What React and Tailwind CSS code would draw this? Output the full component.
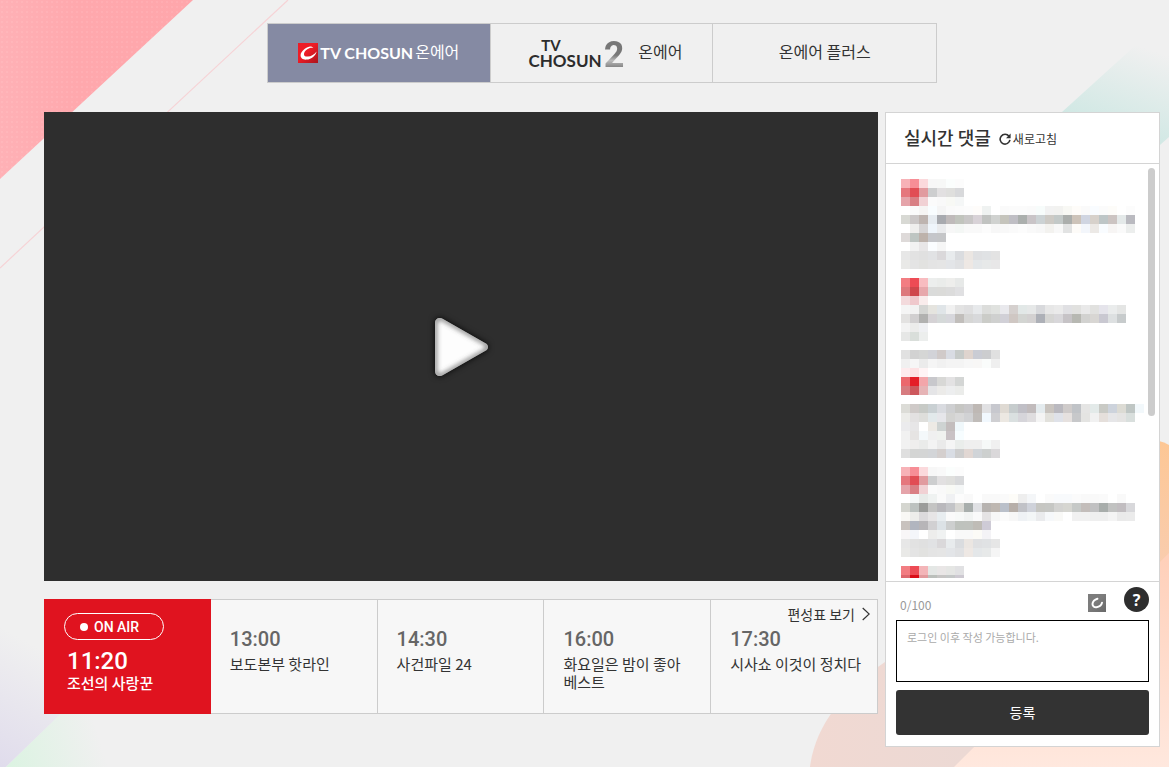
import { useState } from 'react'

// ── Data ──────────────────────────────────────────────────────────────────────

const SCHEDULE = [
  { time: '13:00', title: '보도본부 핫라인' },
  { time: '14:30', title: '사건파일 24' },
  { time: '16:00', title: '화요일은 밤이 좋아 베스트' },
  { time: '17:30', title: '시사쇼 이것이 정치다' },
]

// Masked comments: one string per row of cells, "-" is an empty cell,
// two digits are a grey, six digits a full colour
const COMMENTS = [
  [
    'f7b2b7 f78e96 fbd9dc f7 f7f8f7 fbfefd fc',
    'e5777d e14d54 e19b9f cdcecf e2e0e1 dfdfdd d8d9db',
    'e5a4aa d97f84 f1d1d4 fb f9 f8f9f5 f5f7f7',
    '- fa f6f5f4 f9fdff f5 fa fb fc fefcfa eff2f1 - fa fb fb fa f7fcfb f2 f2f2f0 f8f8f4 fefcf9 fa f9fcff fb fdfcf9 - fc',
    'd8d9d4 cbc7c7 beb4b0 e6ebf0 a8aaaf bfbaba c1c4bd c9c7c7 d8d2d7 c1c3c1 d0d2d0 c5c4bc bfbec4 abafad c9c4c7 ccd2d4 cdcac5 c3c9c8 abaeac cdc3b9 d0d5e1 d7d1cb bec6c7 ccc4c2 e4e9e9 babac0',
    '- efeeed d6d4d5 eff5fb eaebed f7 f4f7f5 f9 f9 fc f7 f8 fa fc f9 f7 f3f2ef f8 e2e3e3 fdfbf8 f3f6fb ece9e6 f9fcff f7f5f4 fa eceeed',
    'dedad9 bec5c2 bdb2ab c5c6ca c5c6c8',
    '- f2 e8e6e7 fbfdff f6',
    'e7 e2 e0 e1e2e4 dad8da e8ebed dadcdf ebe6e2 dfe0e2 e0e2e4 e3',
    'e9e9e7 e4 e2e2e0 e4 e5 e3e5e8 e0e1e3 eee8e4 e4e7e9 e7e9e9 e8e7e8',
  ],
  [
    'f27d82 ed4b55 f8bcc0 eceeed eaecea eeeeec e7e9e8',
    'dd787c cf464c e7a7ab dadbda dbdbd9 dc e0e0e2',
    'f3dadc efc8cc f9ecec',
    'f5 f2 d4d5d3 e5e4df e0e5e8 f1 e3 dfdfe0 e7e9eb dcdddb e0e2df e9e9ed d5d0ce e2e8e7 e6e8e8 d8d9dc e7 ea e0e0e3 e1e1df e9 e1e1df e5e4eb eaecec e4e5e4',
    'e3e2e1 d1cfd0 b1b1b0 d5d2d5 d5d9d9 d7d7dc c1bebb d6d6d5 d8d9db cbccc8 cfd0cf d1d0d7 cfc7c3 d3d5d2 d3d1d1 adb0b7 d5d5d3 d8d7da c6c3c6 b7b8b2 d2d2d0 d8d6d3 c9c8d1 dde0e1 c7cbcc',
    'f3 ececeb eff0f3',
    'e6e7e6 d9deda eceeed',
    '-',
    'e1 d2 d5d6d5 d2d3d8 d0cac9 d9dce3 c7cbc9 dfd4ce caccd4 cccdcf e0',
    'f0 f6 eb f5 f1 f4 f4 f7 f8f7f6 fafcfb ef',
  ],
  [
    'feebed fde2e4 fff4f5',
    'eb686d e41e28 f3a6aa c8c8cc d8d8d6 e3e2e3 d4d6d5',
    'd77c80 cd585d e6b4b6 e5e5e7 ecebe9 edeeef ebecea',
    '-',
    'dcdcd7 cfcac8 c7cac6 c9d0d3 d9dbe0 cecfd1 c6c6c3 c9c8ca beb8b4 e1e1e3 c7c8ce dfdad3 c6cccd c0bfc6 c1bbbc e4ebee c9c4bf bab9bf cfcbca c0c3c7 e5e5e4 e3eae9 c9cac5 cdd3dc dcdbd4 bfc6c4 f2f8fb',
    'ecece9 e3e1e1 dededb e2e9eb e6e6ea d3d3d1 d8 d1d2d4 c0bcb9 f1f8fe cfcfd2 ece8e2 dae0e0 d6d5da dfdddf f4 e2e1dc dfe2e9 e6e1df c7c8ca e4e4e2 f1 e5dfdb e6e6e8 e5e4e3 d9dfdd',
    'ebebed e7e6e7 - edeae5 ced3d2 c3bdbd f0f8fb',
    'f1 e6e4e3 f4f8fa f0 f0f2ef c9c2c5 f7fdff',
    'f1 efeeed eaebea f3 ea f5 eaedeb ef ef f6f9f8 f0',
    'df d4d5d4 d4d5d5 d3d5d8 d4cfce d9dde4 ce e1d7d3 d0d4d8 cdd0cf dad8da',
  ],
  [
    'f7b2b7 f78e96 fbd9dc f7 f9 fbfefd fc',
    'e5777d e14d54 e19b9f cdcecf e2e0e1 dfdfdd d8d9db',
    'e5a4aa d97f84 f1d1d4 fb f9 f8f9f5 f5f7f7',
    '- f4f8f8 e8ebe9 eff2f1 fa f0f1f3 fc f9 - f9 f9 fa fdfcf8 ee f4f6f8 - fa f8fafc f8fafc fb f9 f9 fa - f9',
    'd5d6d0 bcc2c0 9b9c9a c4c4c3 b9b8bc c3c4c7 d9d8d4 a8aeac e0e1e4 b7b3b0 beb7b1 bac0ca b7afa9 c1c2c7 cfd2da c6c6c2 c6c7c4 d3d3d1 d6d6d1 c6c9c7 c3bdba c1c1c2 a8adab c1c2c1 c1bdc0 d8d8db',
    'f9f8f5 ededeb dcdadc e7e5e6 e8edf0 fa f7f9f8 f2f4f3 fa e5e3e4 f7 fb f7 eff2f5 f3f6f7 eaebed f6f8fa f9f9f7 - f1 f1 ef ef f4 ea eb',
    'c8c2be b1b5bf b7b5b8 d1d0d2 dce2e6 cdcfcf bec2bd bfc2bd bfbcb6 cecbd6',
    'f8f6f7 f4f6fa - ededec f0f2f2 - f9 f9 fcfbf7 f4f3f6',
    'e7 e2 e0 e1e2e4 dad8da e8ebed dadcdf ebe6e2 dfe0e2 e0e2e4 e6',
    'e9e9e7 e4 e2e2e0 e4 e5 e3e5e8 e0e1e3 eee8e4 e4e7e9 e7e9e9 f5',
  ],
  [
    'f27d82 ed4b55 f3b5b8 e4e7e5 e9e6e6 e5e6e4 e1e1e3',
    'dd686e d90d18 e29a9d bbbfbb c6c5c4 c4c7c7 cdc9d1',
  ],
]

// ── Icons ─────────────────────────────────────────────────────────────────────

function ChosunMark({ gray, className }) {
  const id = gray ? 'mark-gray' : 'mark-red'
  return (
    <svg viewBox="0 0 20 20" className={className} aria-hidden="true">
      <defs>
        <linearGradient id={id} x1="0" y1="0" x2="1" y2="1">
          <stop offset="0.45" stopColor={gray ? '#7c7c7c' : '#ed1c26'} />
          <stop offset="1" stopColor={gray ? '#696969' : '#a9151d'} />
        </linearGradient>
      </defs>
      <rect width="20" height="20" fill={`url(#${id})`} />
      {gray
        ? <path fill="none" stroke="#fff" strokeWidth="2.200" strokeLinecap="round" d="M10.500 5.200C7.500 6 5 8.600 5 11.200c0 2.300 1.800 3.600 4.400 3.400 3.200-.3 5.600-2.300 6.200-5" />
        : <path fill="#fff" d="M12 3.600C7 4.700 2.800 8.700 2.600 12.300c-.1 3 2.400 4.600 6 4.300 5-.5 9.100-3.900 10-8.200-2 2.900-5.600 5-8.600 5.200-2.800.2-4.300-.9-4-2.900.3-2.100 2.500-4.300 5.300-5.400 1.300-.5 2.600-.6 4-.3-.8-1-2-1.600-3.300-1.400z" />}
    </svg>
  )
}

function PlayIcon() {
  const shape = 'M6 1C3 1 1 3 1 6v48c0 3 2 5 5 5 1 0 2-.3 3-1l42-24c4-2 4-6 0-8L9 2C8 1.300 7 1 6 1z'
  return (
    <svg viewBox="0 0 56 60" className="h-[60px] w-14 overflow-visible drop-shadow-[0_0_3px_rgba(0,0,0,0.9)]" aria-hidden="true">
      <defs>
        <clipPath id="play-clip"><path d={shape} /></clipPath>
        <filter id="play-soft" x="-20%" y="-20%" width="140%" height="140%"><feGaussianBlur stdDeviation="2.500" /></filter>
      </defs>
      <path d={shape} fill="#fdfdfd" />
      <g clipPath="url(#play-clip)">
        <path d={shape} fill="none" stroke="#555" strokeWidth="3" filter="url(#play-soft)" />
      </g>
    </svg>
  )
}

function RefreshIcon() {
  return (
    <svg viewBox="0 0 12 12" className="size-3" fill="none" stroke="#333" strokeWidth="1.600" aria-hidden="true">
      <path d="M10 3.300A4.900 4.900 0 1 0 10.900 6.800" />
      <path d="M11.600.6v4.600H7z" fill="#333" stroke="none" />
    </svg>
  )
}

// ── Backdrop ──────────────────────────────────────────────────────────────────

function Backdrop() {
  return (
    <div className="absolute inset-0 -z-10 overflow-hidden" aria-hidden="true">
      <svg viewBox="0 0 300 767" className="absolute left-0 top-0 h-[767px] w-[300px]">
        <defs>
          <linearGradient id="pink" x1="0" x2="1">
            <stop offset="0" stopColor="#ffb1b6" />
            <stop offset="0.4" stopColor="#ffa8ad" />
            <stop offset="1" stopColor="#ffa6ab" />
          </linearGradient>
          <pattern id="dots" width="5" height="5" patternUnits="userSpaceOnUse">
            <circle cx="2" cy="2" r="1" fill="#fff" opacity="0.09" />
          </pattern>
          <linearGradient id="lilac" gradientUnits="userSpaceOnUse" x1="0" y1="767" x2="60" y2="660">
            <stop offset="0" stopColor="#e0dcec" />
            <stop offset="1" stopColor="#e0dcec" stopOpacity="0" />
          </linearGradient>
          <linearGradient id="mint" gradientUnits="userSpaceOnUse" x1="10" y1="767" x2="100" y2="740">
            <stop offset="0" stopColor="#dcf3e2" />
            <stop offset="1" stopColor="#dcf3e2" stopOpacity="0" />
          </linearGradient>
        </defs>
        <path d="M0 0h193L0 179z" fill="url(#pink)" />
        <path d="M0 0h193L0 179z" fill="url(#dots)" />
        <path d="M288 0L0 268" stroke="#f6d3d6" strokeWidth="1.200" />
        <path d="M0 600h80v95L6 767H0z" fill="url(#lilac)" />
        <path d="M6 767l74-72h60v72z" fill="url(#mint)" />
      </svg>
      <svg viewBox="0 0 400 767" className="absolute right-0 top-0 h-[767px] w-[400px]">
        <defs>
          <linearGradient id="teal" gradientUnits="userSpaceOnUse" x1="310" y1="120" x2="340" y2="35">
            <stop offset="0" stopColor="#d0e8e4" />
            <stop offset="1" stopColor="#d0e8e4" stopOpacity="0" />
          </linearGradient>
          <linearGradient id="orange" x1="0" y1="0" x2="0" y2="1">
            <stop offset="0" stopColor="#fdc795" />
            <stop offset="1" stopColor="#f9cdb0" />
          </linearGradient>
          <linearGradient id="peach" gradientUnits="userSpaceOnUse" x1="0" y1="560" x2="0" y2="767">
            <stop offset="0" stopColor="#ffd0ba" />
            <stop offset="1" stopColor="#ffe8de" />
          </linearGradient>
          <linearGradient id="rose" gradientUnits="userSpaceOnUse" x1="40" y1="0" x2="200" y2="0">
            <stop offset="0" stopColor="#f1d9d2" />
            <stop offset="1" stopColor="#ecd9d4" />
          </linearGradient>
        </defs>
        <path d="M293 112L400 15v122l-60 53z" fill="url(#teal)" />
        <path d="M390 441q5 1 10 4v130h-10z" fill="url(#orange)" />
        <path d="M41 767C46 726 74 691 116 662L229 610v157z" fill="url(#rose)" />
        <path d="M185 767L400 553v214z" fill="url(#peach)" />
      </svg>
    </div>
  )
}

// ── Tabs ──────────────────────────────────────────────────────────────────────

function ChannelTabs() {
  const base = 'flex items-center justify-center text-base leading-6'
  return (
    <nav className="mx-auto grid h-[60px] w-full max-w-[670px] grid-cols-3 divide-x divide-[#ccc] border border-[#ccc]">
      <a href="#tv1" className={`${base} gap-[2px] bg-[#858aa3] text-white`}>
        <ChosunMark className="size-5" />
        <span className="font-[Lato] text-base font-bold">TV CHOSUN</span>
        <span className="pb-1">온에어</span>
      </a>
      <a href="#tv2" className={`${base} gap-[14px] pl-2`}>
        <span className="flex items-end gap-[2px] pt-[2px] font-[Lato] font-bold text-[#2c2c2c]">
          <span className="flex flex-col items-center">
            <span className="pr-7 text-[15px] leading-[13px]">TV</span>
            <span className="text-[17px] leading-[17px]">CHOSUN</span>
          </span>
          <span className="bg-linear-to-b from-[#777] from-50% via-[#bbb] via-70% to-[#777] bg-clip-text font-[Roboto] text-[36px] leading-7 text-transparent">2</span>
        </span>
        <span className="pb-1">온에어</span>
      </a>
      <a href="#plus" className={base}>
        <span className="pb-1">온에어 플러스</span>
      </a>
    </nav>
  )
}

// ── Schedule ──────────────────────────────────────────────────────────────────

function Schedule() {
  return (
    <section className="relative mt-[18px] grid h-[115px] grid-cols-5">
      <div className="bg-[#e0131f] pl-5 pt-[14px] text-white">
        <p className="flex h-[27px] w-[100px] items-center gap-[6px] rounded-full border border-white pl-[15px] font-[Roboto] text-sm font-medium">
          <span className="size-2 rounded-full bg-white" />
          ON AIR
        </p>
        <div className="pl-[3px] pt-2">
          <p className="font-[Roboto] text-2xl leading-[26px] font-medium">11:20</p>
          <p className="text-[15px] leading-[18px] font-medium">조선의 사랑꾼</p>
        </div>
      </div>
      {SCHEDULE.map(({ time, title }) => (
        <div key={time} className="border-y border-r border-[#ccc] bg-[#f7f7f7] pl-[19px] pr-3 pt-[27px]">
          <p className="font-[Roboto] text-xl leading-6 font-medium text-[#666]">{time}</p>
          <p className="mt-1 text-[15px] leading-[18px] break-keep">{title}</p>
        </div>
      ))}
      <a href="#schedule" className="absolute right-2 top-[5px] flex items-center gap-[7px] text-sm leading-5">
        편성표 보기
        <svg viewBox="0 0 8 14" className="h-[14px] w-2" fill="none" stroke="#333" strokeWidth="1.200" aria-hidden="true">
          <path d="M.7 1l6.500 6-6.500 6" />
        </svg>
      </a>
    </section>
  )
}

// ── Comments ──────────────────────────────────────────────────────────────────

const CELL = 9

function MaskedComment({ rows }) {
  const height = rows.length * CELL
  return (
    <svg width={27 * CELL} height={height} viewBox={`0 0 ${27 * CELL} ${height}`} shapeRendering="crispEdges" aria-hidden="true">
      {rows.map((row, y) => row.split(' ').map((c, x) => c !== '-' && (
        <rect key={`${x}-${y}`} x={x * CELL} y={y * CELL} width={CELL} height={CELL}
          fill={`#${c.length === 2 ? c + c + c : c}`} />
      )))}
    </svg>
  )
}

function CommentPanel() {
  const [text, setText] = useState('')

  return (
    <aside className="w-[275px] shrink-0 border border-[#d4d4d4] bg-white">
      <header className="flex h-[51px] items-center gap-2 border-b border-[#d4d4d4] pb-[3px] pl-[18px]">
        <h2 className="text-lg leading-6 font-medium">실시간 댓글</h2>
        <button type="button" className="flex items-center gap-[2px] pt-1 text-xs leading-4">
          <RefreshIcon />
          새로고침
        </button>
      </header>

      <div className="relative h-[418px] border-b border-[#d4d4d4] pb-[3px] pl-[15px] pt-[15px]">
        <ul className="flex h-full flex-col overflow-hidden">
          {COMMENTS.map((rows, i) => (
            <li key={i} className={i === 1 ? 'shrink-0' : 'shrink-0 pb-[9px]'}>
              <MaskedComment rows={rows} />
            </li>
          ))}
        </ul>
        <span className="absolute right-1 top-1 h-[248px] w-[7px] rounded-full bg-[#ccc]" />
      </div>

      <form className="px-[10px] pb-[11px]" onSubmit={e => e.preventDefault()}>
        <div className="flex h-[38px] items-start pl-1 pt-[5px]">
          <label htmlFor="comment" className="pt-2 text-xs leading-5 text-[#999]">{text.length}/100</label>
          <ChosunMark gray className="ml-auto mt-[7px] size-[18px]" />
          <button type="button" aria-label="도움말"
            className="ml-[18px] size-[25px] rounded-full bg-[#2e2e2e] font-['Noto_Sans'] text-base leading-6 font-bold text-white">
            ?
          </button>
        </div>
        <textarea id="comment" maxLength={100} value={text} onChange={e => setText(e.target.value)}
          placeholder="로그인 이후 작성 가능합니다."
          className="block h-[62px] w-full resize-none border border-black px-[10px] py-2 text-[11px] leading-4 placeholder:text-[#aaa]" />
        <button type="submit" className="mt-2 h-[45px] w-full rounded-[3px] bg-[#333] pb-[2px] text-sm text-white">등록</button>
      </form>
    </aside>
  )
}

// ── Root App ──────────────────────────────────────────────────────────────────

export default function App() {
  return (
    <div className="relative isolate min-h-screen bg-[#f0f0f0] pb-5 pl-11 pr-[9px] pt-[23px] font-['Noto_Sans_CJK_KR',sans-serif] text-[#333]">
      <Backdrop />
      <ChannelTabs />
      <div className="mt-[29px] flex items-start gap-[7px]">
        <main className="min-w-0 flex-1">
          <button type="button" aria-label="재생" className="flex aspect-video w-full items-center justify-center bg-[#2e2e2e] pl-[2px]">
            <PlayIcon />
          </button>
          <Schedule />
        </main>
        <CommentPanel />
      </div>
    </div>
  )
}
